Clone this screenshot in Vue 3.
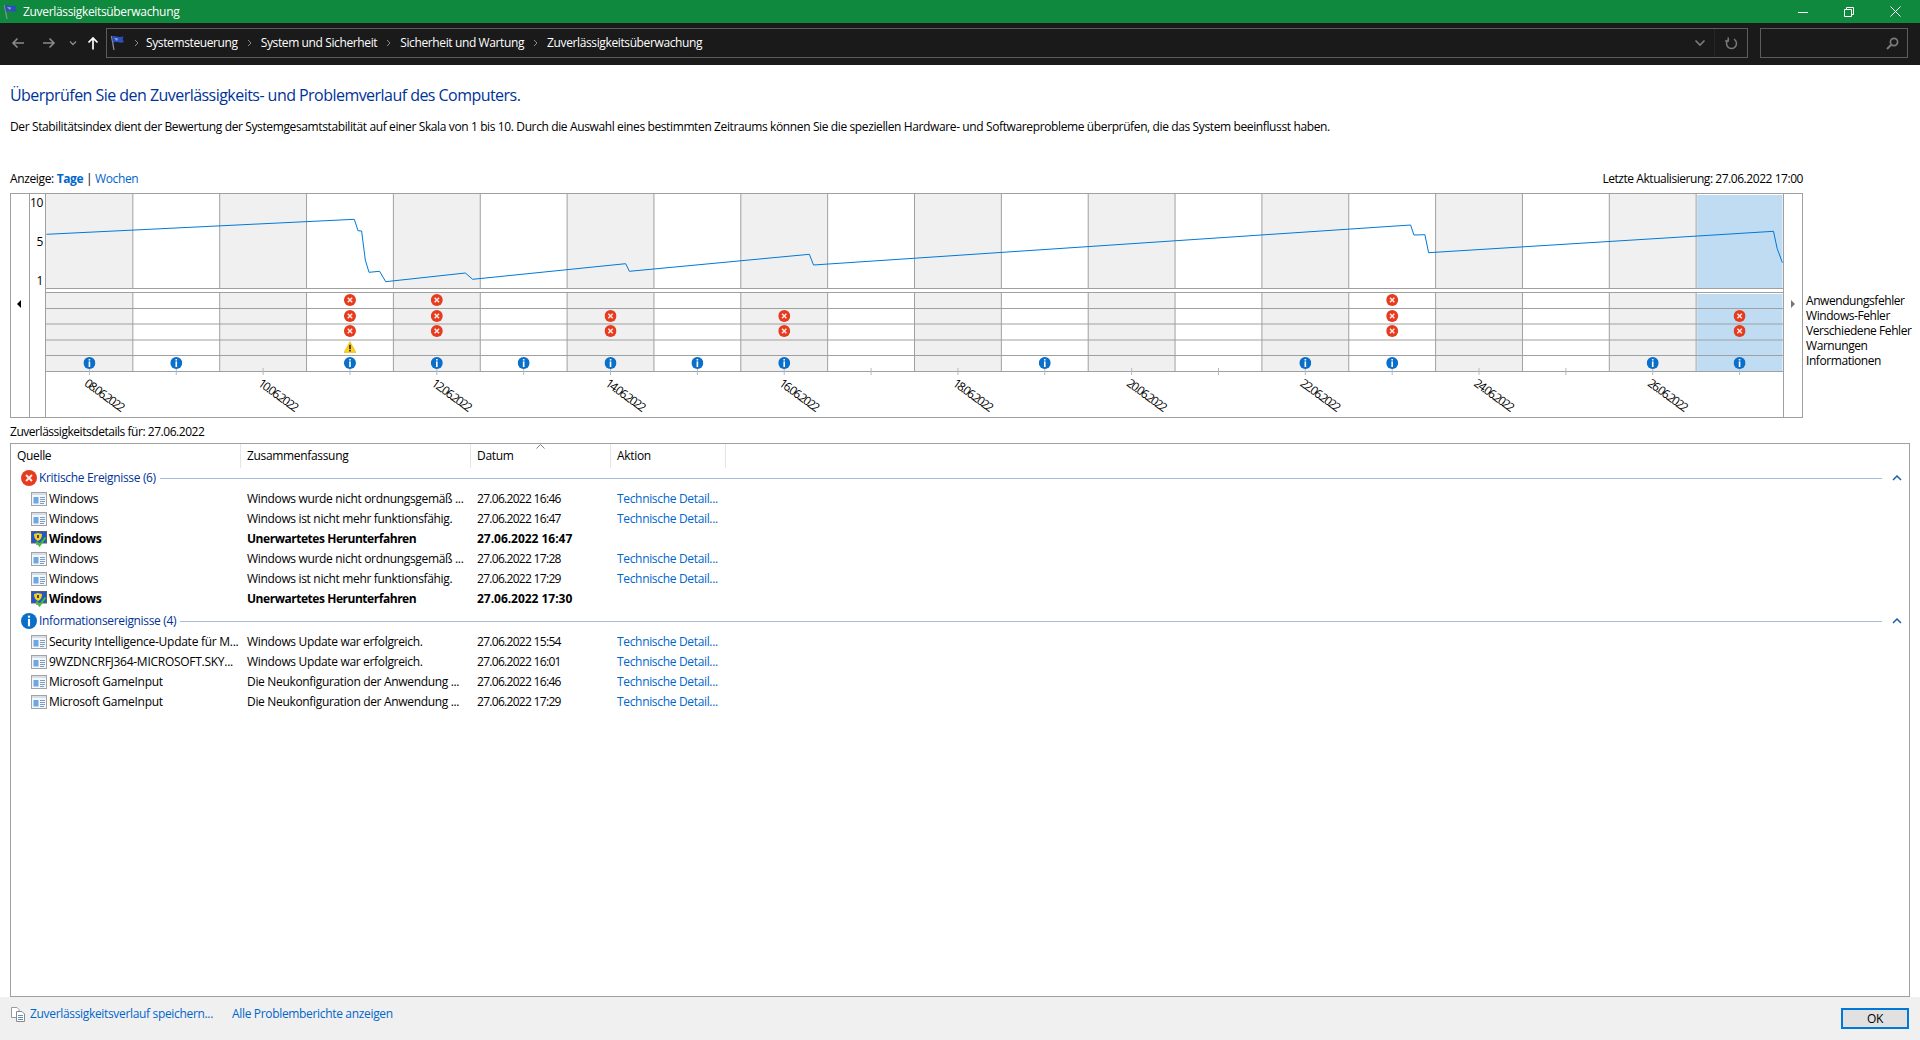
<script setup>
const colW = 86.85
const x0 = 46
const cols = Array.from({ length: 20 }, (_, i) => i)
const cx = (i) => x0 + colW * (i + 0.5)
const colX = (i) => x0 + colW * i
const linePts = '46.5,234.3 354.3,219.3 358,230.7 361.6,231 365.3,260 369,272.3 379.6,271.3 385.7,281.7 465.3,273 472.7,279.3 625.7,263.7 629.4,271.3 809.4,254.3 813.5,265 1410.6,225 1413.9,235 1424.9,234.7 1428.6,252.7 1773.5,231.3 1777.1,248.3 1782.4,262.7'
const rowLines = [308.5, 324, 340, 355.5, 371.5]
const errRows = [
  { y: 300, cols: [3, 4, 15] },
  { y: 316, cols: [3, 4, 6, 8, 15, 19] },
  { y: 331, cols: [3, 4, 6, 8, 15, 19] }
]
const infoCols = [0, 1, 3, 4, 5, 6, 7, 8, 11, 14, 15, 18, 19]
const dates = ['08', '10', '12', '14', '16', '18', '20', '22', '24', '26'].map((d, i) => ({ text: d + '.06.2022', x: cx(i * 2) - 6 }))
const legend = ['Anwendungsfehler', 'Windows-Fehler', 'Verschiedene Fehler', 'Warnungen', 'Informationen']
const crumbs = ['Systemsteuerung', 'System und Sicherheit', 'Sicherheit und Wartung', 'Zuverlässigkeitsüberwachung']
const headers = ['Quelle', 'Zusammenfassung', 'Datum', 'Aktion']
const groups = [
  {
    kind: 'err', title: 'Kritische Ereignisse (6)',
    rows: [
      { s: 'Windows', z: 'Windows wurde nicht ordnungsgemäß ...', d: '27.06.2022 16:46', a: true },
      { s: 'Windows', z: 'Windows ist nicht mehr funktionsfähig.', d: '27.06.2022 16:47', a: true },
      { s: 'Windows', z: 'Unerwartetes Herunterfahren', d: '27.06.2022 16:47', b: true },
      { s: 'Windows', z: 'Windows wurde nicht ordnungsgemäß ...', d: '27.06.2022 17:28', a: true },
      { s: 'Windows', z: 'Windows ist nicht mehr funktionsfähig.', d: '27.06.2022 17:29', a: true },
      { s: 'Windows', z: 'Unerwartetes Herunterfahren', d: '27.06.2022 17:30', b: true }
    ]
  },
  {
    kind: 'info', title: 'Informationsereignisse (4)',
    rows: [
      { s: 'Security Intelligence-Update für M...', z: 'Windows Update war erfolgreich.', d: '27.06.2022 15:54', a: true },
      { s: '9WZDNCRFJ364-MICROSOFT.SKY...', z: 'Windows Update war erfolgreich.', d: '27.06.2022 16:01', a: true },
      { s: 'Microsoft GameInput', z: 'Die Neukonfiguration der Anwendung ...', d: '27.06.2022 16:46', a: true },
      { s: 'Microsoft GameInput', z: 'Die Neukonfiguration der Anwendung ...', d: '27.06.2022 17:29', a: true }
    ]
  }
]
</script>

<template>
  <div class="app">
    <svg class="defs" width="0" height="0">
      <defs>
        <symbol id="flag" viewBox="0 0 16 16">
          <path d="M2.5 1 L5 15" stroke="#8a8f99" stroke-width="1.3" fill="none" />
          <path d="M3 1.5 C6 0 8 3 14.5 1.5 C13.5 3.5 13.5 5 15 7 C10 9 7 5.5 4 8 Z" fill="#2f4fb8" />
          <path d="M5 3 L9 3.6 L8 6 Z" fill="#8fa8ea" />
        </symbol>
        <symbol id="err" viewBox="0 0 12 12">
          <circle cx="6" cy="6" r="6" fill="#e63b1f" />
          <path d="M3.8 3.8 L8.2 8.2 M8.2 3.8 L3.8 8.2" stroke="#ffe9e3" stroke-width="1.5" />
        </symbol>
        <symbol id="info" viewBox="0 0 12 12">
          <circle cx="6" cy="6" r="6" fill="#0a6fc9" />
          <rect x="5.2" y="2" width="1.6" height="1.5" fill="#fff" />
          <rect x="5.2" y="4.4" width="1.6" height="5.6" fill="#fff" />
        </symbol>
        <symbol id="warn" viewBox="0 0 12 12">
          <path d="M6 0.5 L12 11.5 L0 11.5 Z" fill="#fbcf14" stroke="#e6ac00" stroke-width="0.5" />
          <rect x="5.2" y="3.8" width="1.6" height="4.4" fill="#222" />
          <rect x="5.2" y="9" width="1.6" height="1.5" fill="#222" />
        </symbol>
        <symbol id="doc" viewBox="0 0 16 14">
          <rect x="0.5" y="0.5" width="15" height="13" fill="#f4f8fd" stroke="#a0a4a8" />
          <rect x="1" y="1" width="14" height="2" fill="#d5dde6" />
          <rect x="2.5" y="5" width="5" height="6.5" fill="#6ea6e0" />
          <path d="M9 5.5 H14 M9 7.5 H14 M9 9.5 H14 M9 11.5 H13" stroke="#7f9cc0" stroke-width="1" />
        </symbol>
        <symbol id="shield" viewBox="0 0 16 16">
          <rect x="0.5" y="0.5" width="15" height="11.5" fill="#2557c4" stroke="#5c6066" />
          <rect x="5" y="12" width="4" height="2" fill="#9aa0a6" />
          <path d="M7 2 L11 3 C11 6.5 10 8.5 7 10 C4 8.5 3 6.5 3 3 Z" fill="#f2d02c" />
          <rect x="6" y="4" width="2" height="3" fill="#5a4a10" />
          <path d="M5.5 10.5 L8.5 14.5 L14.5 6.5" fill="none" stroke="#43bf35" stroke-width="2" />
        </symbol>
      </defs>
    </svg>

    <header class="titlebar">
      <svg class="title-flag" width="16" height="16"><use href="#flag" /></svg>
      <span class="title-text">Zuverlässigkeitsüberwachung</span>
      <div class="caption">
        <span class="cap-btn"><svg width="10" height="10" viewBox="0 0 10 10"><path d="M0 5.5 H10" stroke="#fff" /></svg></span>
        <span class="cap-btn"><svg width="10" height="10" viewBox="0 0 10 10"><path d="M0.5 2.5 H7.5 V9.5 H0.5 Z M2.5 2.5 V0.5 H9.5 V7.5 H7.5" fill="none" stroke="#fff" /></svg></span>
        <span class="cap-btn"><svg width="11" height="11" viewBox="0 0 11 11"><path d="M0.5 0.5 L10.5 10.5 M10.5 0.5 L0.5 10.5" stroke="#fff" /></svg></span>
      </div>
    </header>

    <nav class="navbar">
      <span class="nav-btn back"><svg width="14" height="12" viewBox="0 0 14 12"><path d="M13 6 H2 M6.5 1.5 L2 6 L6.5 10.5" fill="none" stroke="#8a8a8a" stroke-width="1.6" /></svg></span>
      <span class="nav-btn fwd"><svg width="14" height="12" viewBox="0 0 14 12"><path d="M1 6 H12 M7.5 1.5 L12 6 L7.5 10.5" fill="none" stroke="#8a8a8a" stroke-width="1.6" /></svg></span>
      <span class="nav-btn drop"><svg width="8" height="6" viewBox="0 0 8 6"><path d="M1 1.5 L4 4.5 L7 1.5" fill="none" stroke="#8a8a8a" stroke-width="1.4" /></svg></span>
      <span class="nav-btn up"><svg width="12" height="14" viewBox="0 0 12 14"><path d="M6 13.5 V2 M1.5 6.5 L6 2 L10.5 6.5" fill="none" stroke="#fff" stroke-width="1.7" /></svg></span>
      <div class="address">
        <svg class="addr-flag" width="16" height="16"><use href="#flag" /></svg>
        <template v-for="c in crumbs" :key="c">
          <svg class="sep" width="5" height="8" viewBox="0 0 5 8"><path d="M1 1 L4 4 L1 7" fill="none" stroke="#8a8a8a" /></svg>
          <span class="crumb">{{ c }}</span>
        </template>
        <span class="addr-drop"><svg width="12" height="8" viewBox="0 0 12 8"><path d="M1.5 1.5 L6 6 L10.5 1.5" fill="none" stroke="#7a7a7a" stroke-width="1.7" /></svg></span>
        <span class="addr-refresh"><svg width="13" height="13" viewBox="0 0 13 13"><path d="M4 1.7 A5 5 0 1 0 9 1.7 M3.2 0 V3.6 H0" transform="translate(0 0.4)" fill="none" stroke="#7a7a7a" stroke-width="1.5" /></svg></span>
      </div>
      <div class="search">
        <svg width="13" height="13" viewBox="0 0 13 13"><circle cx="8" cy="5" r="3.6" fill="none" stroke="#7a7a7a" stroke-width="1.7" /><path d="M5.2 7.8 L1 12" stroke="#7a7a7a" stroke-width="2" /></svg>
      </div>
    </nav>

    <main class="main">
      <h1 class="heading">Überprüfen Sie den Zuverlässigkeits- und Problemverlauf des Computers.</h1>
      <p class="desc">Der Stabilitätsindex dient der Bewertung der Systemgesamtstabilität auf einer Skala von 1 bis 10. Durch die Auswahl eines bestimmten Zeitraums können Sie die speziellen Hardware- und Softwareprobleme überprüfen, die das System beeinflusst haben.</p>

      <div class="view-row">
        <span class="view-left">Anzeige: <a class="link strong">Tage</a> | <a class="link">Wochen</a></span>
        <span class="updated">Letzte Aktualisierung: 27.06.2022 17:00</span>
      </div>

      <div class="chart-row">
        <svg class="chart" width="1793" height="225" viewBox="10 193 1793 225">
          <g v-for="i in cols" :key="i">
            <template v-if="i === 19">
              <rect :x="colX(i) + 1" y="195" :width="colW - 1.5" height="93" fill="#c0dcf3" />
              <rect :x="colX(i) + 1" y="294" :width="colW - 1.5" height="77" fill="#c0dcf3" />
            </template>
            <template v-else-if="i % 2 === 0">
              <rect :x="colX(i)" y="194" :width="colW" height="94" fill="#f0f0f0" />
              <rect :x="colX(i)" y="293" :width="colW" height="78" fill="#f0f0f0" />
            </template>
          </g>
          <g class="grid">
            <template v-for="i in cols" :key="i">
              <path v-if="i > 0" :d="`M${colX(i)} 194 V288 M${colX(i)} 293 V371`" />
            </template>
            <path v-for="y in rowLines" :key="y" :d="`M46 ${y} H1783`" />
            <path d="M46 288.5 H1783 M46 292.5 H1783" />
            <rect x="10.5" y="193.5" width="1792" height="224" fill="none" />
            <path d="M29.5 194 V417 M45.5 194 V417 M1783.5 194 V417" />
          </g>
          <path v-for="i in cols" :key="'t' + i" class="tick" :d="`M${cx(i)} 368 V375`" />
          <polyline class="line" :points="linePts" />
          <g v-for="r in errRows" :key="r.y">
            <use v-for="c in r.cols" :key="c" href="#err" :x="cx(c) - 6" :y="r.y - 6" width="12" height="12" />
          </g>
          <use href="#warn" :x="cx(3) - 6" y="341" width="12" height="12" />
          <use v-for="c in infoCols" :key="c" href="#info" :x="cx(c) - 6" y="357" width="12" height="12" />
          <text class="axis" x="43" y="207" text-anchor="end">10</text>
          <text class="axis" x="43" y="246" text-anchor="end">5</text>
          <text class="axis" x="43" y="285" text-anchor="end">1</text>
          <text v-for="d in dates" :key="d.text" class="date" :x="d.x" y="385" :transform="`rotate(36 ${d.x} 385)`">{{ d.text }}</text>
          <path d="M21 300 V308 L17 304 Z" fill="#000" />
          <path d="M1791 300 V308 L1795 304 Z" fill="#777" />
        </svg>
        <ul class="legend">
          <li v-for="l in legend" :key="l">{{ l }}</li>
        </ul>
      </div>

      <div class="details-label">Zuverlässigkeitsdetails für: 27.06.2022</div>

      <section class="listbox">
        <div class="grid-row head">
          <div v-for="h in headers" :key="h" class="hcell">{{ h }}<svg v-if="h === 'Datum'" class="sort" width="9" height="5" viewBox="0 0 9 5"><path d="M0.5 4.5 L4.5 0.5 L8.5 4.5" fill="none" stroke="#808080" /></svg></div>
        </div>
        <div v-for="g in groups" :key="g.title" class="group">
          <div class="group-head">
            <svg class="group-icon" width="16" height="16"><use :href="g.kind === 'err' ? '#err' : '#info'" /></svg>
            <span class="group-title">{{ g.title }}</span>
            <span class="group-line"></span>
            <svg class="collapse" width="10" height="6" viewBox="0 0 10 6"><path d="M1 5 L5 1 L9 5" fill="none" stroke="#1e5fb0" stroke-width="1.5" /></svg>
          </div>
          <div v-for="(r, i) in g.rows" :key="i" class="grid-row item" :class="{ bold: r.b }">
            <div class="src">
              <svg width="16" :height="r.b ? 16 : 14"><use :href="r.b ? '#shield' : '#doc'" /></svg>
              <span>{{ r.s }}</span>
            </div>
            <div class="cell sum">{{ r.z }}</div>
            <div class="cell date-cell">{{ r.d }}</div>
            <div class="cell"><a v-if="r.a" class="link">Technische Detail...</a></div>
          </div>
        </div>
      </section>
    </main>

    <footer class="footer">
      <div class="foot-links">
        <svg width="14" height="15" viewBox="0 0 14 15"><path d="M0.5 0.5 H6 L8 2.5 V10.5 H0.5 Z" fill="#fff" stroke="#9a9a9a" /><path d="M5.5 4.5 H11 L13.5 7 V14.5 H5.5 Z" fill="#fff" stroke="#8a8a8a" /><path d="M7 8.5 H12 M7 10.5 H12 M7 12.5 H12" stroke="#5f8fc5" /></svg>
        <a class="link first">Zuverlässigkeitsverlauf speichern...</a>
        <a class="link">Alle Problemberichte anzeigen</a>
      </div>
      <button class="ok">OK</button>
    </footer>
  </div>
</template>

<style>
html, body { margin: 0; background: #fff; }
</style>

<style scoped>
.app {
  height: 100vh;
  display: flex;
  flex-direction: column;
  overflow: hidden;
  font-family: "Open Sans", "Noto Sans", sans-serif;
  font-size: 12px;
  letter-spacing: -0.33px;
  line-height: 16px;
  color: #000;
  background: #fff;
}
.defs { position: absolute; }
.titlebar {
  height: 23px;
  background: #0f893e;
  color: #fff;
  display: flex;
  align-items: center;
  flex: none;
}
.title-flag { margin-left: 2px; margin-right: 5px; }
.caption { margin-left: auto; display: flex; padding-right: 2px; }
.cap-btn { width: 46px; height: 21px; display: flex; align-items: center; justify-content: center; }
.navbar {
  height: 42px;
  flex: none;
  background: #1a1a1a;
  color: #fff;
  display: flex;
  align-items: flex-start;
  padding: 5px 12px 0 8px;
  box-sizing: border-box;
}
.nav-btn { height: 30px; display: flex; align-items: center; justify-content: center; }
.back { width: 20px; }
.fwd { width: 20px; margin-left: 11px; }
.drop { width: 14px; margin-left: 7px; }
.up { width: 20px; margin-left: 3px; margin-right: 3px; }
.address {
  flex: 1;
  height: 30px;
  box-sizing: border-box;
  border: 1px solid #5c5c5c;
  display: flex;
  align-items: center;
  gap: 9px;
  padding-left: 2px;
  letter-spacing: -0.38px;
}
.sep:first-of-type { margin-left: -1px; }
.address .crumb:first-of-type { margin-left: -2px; }
.addr-drop { margin-left: auto; width: 12px; display: flex; margin-right: -1px; }
.addr-refresh {
  width: 33px;
  height: 28px;
  border-left: 1px solid #262626;
  display: flex;
  align-items: center;
  justify-content: center;
  padding-left: 1px;
  box-sizing: border-box;
}
.search {
  width: 148px;
  height: 30px;
  margin-left: 12px;
  box-sizing: border-box;
  border: 1px solid #5c5c5c;
  display: flex;
  align-items: center;
  justify-content: flex-end;
  padding-right: 8px;
}
.main {
  flex: 1;
  min-height: 0;
  display: flex;
  flex-direction: column;
  padding: 0 10px;
}
.heading {
  margin: 19px 0 0;
  font-size: 16px;
  line-height: 22px;
  font-weight: 400;
  letter-spacing: -0.54px;
  color: #003399;
}
.desc { margin: 13px 0 0; white-space: nowrap; letter-spacing: -0.38px; }
.view-row {
  margin-top: 36px;
  width: 1793px;
  display: flex;
  justify-content: space-between;
}
.view-left { letter-spacing: -0.36px; }
.updated { letter-spacing: -0.45px; }
.link { color: #0066cc; }
.strong { font-weight: 700; }
.chart-row { margin-top: 6px; display: flex; height: 225px; flex: none; }
.chart { display: block; flex: none; }
.grid path, .grid rect { stroke: #a0a0a0; stroke-width: 1; }
.tick { stroke: #b8b8b8; stroke-width: 1; }
.line { fill: none; stroke: #0078d7; stroke-width: 1; }
.axis { font-size: 12px; fill: #000; }
.date { font-size: 12px; fill: #000; letter-spacing: -1.6px; }
.legend {
  list-style: none;
  margin: 0;
  padding: 100px 0 0 3px;
  line-height: 15px;
  white-space: nowrap;
  letter-spacing: -0.43px;
}
.details-label { margin-top: 6px; letter-spacing: -0.46px; }
.listbox {
  margin-top: 3px;
  flex: 1;
  min-height: 0;
  box-sizing: border-box;
  border: 1px solid #a0a0a0;
}
.grid-row {
  display: grid;
  grid-template-columns: 230px 230px 140px 115px;
}
.head { height: 24px; }
.hcell {
  position: relative;
  padding-left: 6px;
  line-height: 23px;
  border-right: 1px solid #e5e5e5;
}
.sort { position: absolute; left: 65px; top: 0; }
.group-head {
  height: 20px;
  display: flex;
  align-items: center;
  color: #003399;
  padding-right: 7px;
}
.group + .group { margin-top: 3px; }
.group-icon { margin-left: 10px; margin-right: 2px; }
.group-line { flex: 1; height: 1px; background: #a5bcdc; margin: 0 10px 0 4px; }
.item { height: 20px; line-height: 20px; white-space: nowrap; box-sizing: border-box; padding-top: 1px; }
.src { display: flex; align-items: center; gap: 2px; padding-left: 20px; letter-spacing: -0.27px; height: 20px; }
.cell { padding-left: 6px; }
.date-cell { letter-spacing: -0.7px; }
.bold { font-weight: 700; }
.bold .sum { letter-spacing: -0.46px; }
.bold .date-cell { letter-spacing: -0.03px; }
.footer {
  height: 43px;
  flex: none;
  background: #f0f0f0;
  display: flex;
  justify-content: space-between;
  align-items: flex-start;
  padding: 0 11px;
}
.foot-links { display: flex; align-items: center; margin-top: 9px; gap: 5px; }
.first { margin-right: 14px; }
.ok {
  margin-top: 11px;
  width: 68px;
  height: 21px;
  box-sizing: border-box;
  border: 2px solid #0078d7;
  background: #e1e1e1;
  font: inherit;
  letter-spacing: inherit;
  color: #000;
  padding: 0;
}
</style>
